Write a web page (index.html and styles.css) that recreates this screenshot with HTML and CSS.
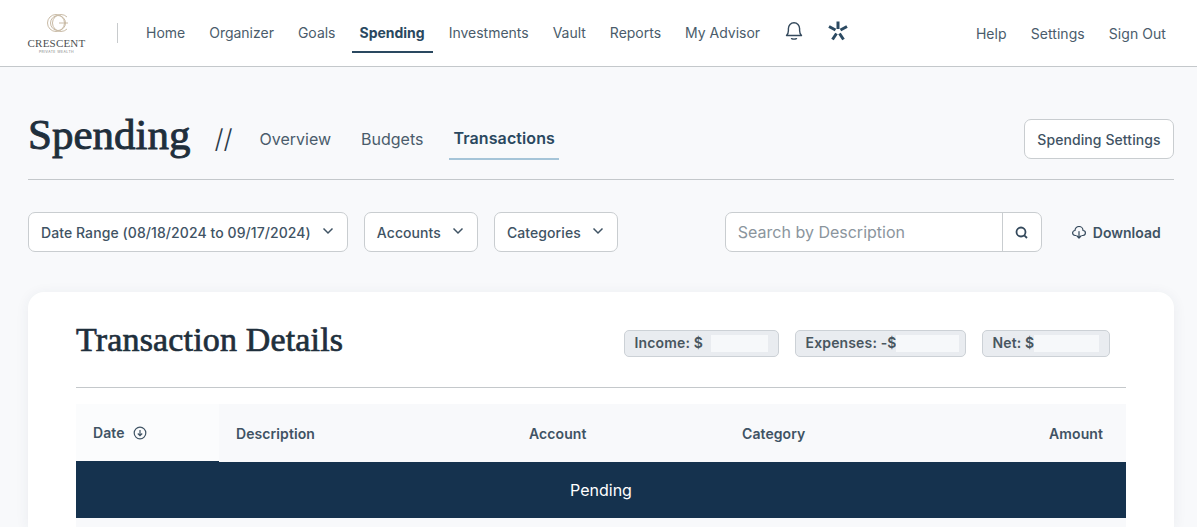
FILE: index.html
```html
<!DOCTYPE html>
<html lang="en">
<head>
<meta charset="utf-8">
<title>Spending</title>
<link rel="stylesheet" href="styles.css">
</head>
<body>
<header class="topbar">
  <div class="logo">
    <svg class="logo-mark" width="24" height="22" viewBox="0 0 24 22" fill="none" stroke="#c9bba6" stroke-width="1">
      <circle cx="10" cy="11" r="8.500"/>
      <circle cx="12" cy="11" r="7.500"/>
      <path d="M21 5a8.500 8.500 0 1 0 0 12"/>
      <path d="M13 11h9"/>
    </svg>
    <div class="logo-name">CRESCENT</div>
    <div class="logo-sub">PRIVATE WEALTH</div>
  </div>
  <span class="logo-divider"></span>
  <nav class="main-nav">
    <a class="nav-item">Home</a>
    <a class="nav-item">Organizer</a>
    <a class="nav-item">Goals</a>
    <a class="nav-item active">Spending</a>
    <a class="nav-item">Investments</a>
    <a class="nav-item">Vault</a>
    <a class="nav-item">Reports</a>
    <a class="nav-item">My Advisor</a>
    <svg class="bell" width="18" height="20" viewBox="0 0 18 20" fill="none" stroke="#34495c" stroke-width="1.400" stroke-linecap="round" stroke-linejoin="round">
      <path d="M1.500 14.500c1.400-1.300 1.900-2.600 1.900-5V7.600C3.400 4.300 5.800 1.700 9 1.700s5.600 2.600 5.600 5.900v1.900c0 2.400.5 3.700 1.900 5z"/>
      <path d="M6.500 17.600c1.500.6 3.500.6 5 0"/>
    </svg>
    <svg class="spark" width="20" height="20" viewBox="0 0 20 20" fill="none" stroke="#2b4a62" stroke-width="3">
      <path d="M10 .5v7.500M1 5.500 7.500 9M19 5.500 12.500 9M4.500 18.500 8.500 12.500M15.500 18.500 11.500 12.500"/>
    </svg>
  </nav>
  <nav class="util-nav">
    <a class="nav-item">Help</a>
    <a class="nav-item">Settings</a>
    <a class="nav-item">Sign Out</a>
  </nav>
</header>

<main class="page">
  <section class="page-head">
    <h1 class="page-title">Spending</h1>
    <span class="slashes">//</span>
    <a class="tab">Overview</a>
    <a class="tab">Budgets</a>
    <a class="tab current">Transactions</a>
    <button class="btn settings-btn">Spending Settings</button>
  </section>

  <section class="filters">
    <button class="btn select">Date Range (08/18/2024 to 09/17/2024)
      <svg width="12" height="8" viewBox="0 0 12 8" fill="none" stroke="#3f5364" stroke-width="1.500"><path d="M1.500 1.500 6 6l4.500-4.500"/></svg>
    </button>
    <button class="btn select">Accounts
      <svg width="12" height="8" viewBox="0 0 12 8" fill="none" stroke="#3f5364" stroke-width="1.500"><path d="M1.500 1.500 6 6l4.500-4.500"/></svg>
    </button>
    <button class="btn select">Categories
      <svg width="12" height="8" viewBox="0 0 12 8" fill="none" stroke="#3f5364" stroke-width="1.500"><path d="M1.500 1.500 6 6l4.500-4.500"/></svg>
    </button>
    <div class="search">
      <span class="search-input">Search by Description</span>
      <span class="search-btn">
        <svg width="13" height="13" viewBox="0 0 13 13" fill="none" stroke="#34495c" stroke-width="1.800"><circle cx="6" cy="6" r="4.500"/><path d="m9.300 9.300 2.700 2.700"/></svg>
      </span>
    </div>
    <a class="download">
      <svg width="14" height="13" viewBox="0 0 14 13" fill="none" stroke="#34495c" stroke-width="1.200" stroke-linecap="round" stroke-linejoin="round"><path d="M4 9.500H3.200A2.500 2.500 0 0 1 3 4.500 4 4 0 0 1 11 4.500 2.500 2.500 0 0 1 10.800 9.500H10"/><path d="M7 5.500v6.500M5 10l2 2 2-2"/></svg>
      Download
    </a>
  </section>

  <section class="card">
    <div class="card-head">
      <h2 class="card-title">Transaction Details</h2>
      <div class="pills">
        <div class="pill pill-income"><span>Income: $</span><i class="mask mask-income"></i></div>
        <div class="pill pill-expenses"><span>Expenses: -$</span><i class="mask mask-expenses"></i></div>
        <div class="pill pill-net"><span>Net: $</span><i class="mask mask-net"></i></div>
      </div>
    </div>
    <div class="table-head">
      <div class="th th-date">Date
        <svg width="14" height="14" viewBox="0 0 14 14" fill="none" stroke="#3f5364" stroke-width="1.200"><circle cx="7" cy="7" r="5.800"/><path d="M7 4v5.500M4.800 7.500 7 9.700l2.200-2.200"/></svg>
      </div>
      <div class="th th-desc">Description</div>
      <div class="th th-account">Account</div>
      <div class="th th-category">Category</div>
      <div class="th th-amount">Amount</div>
    </div>
    <div class="pending-row">Pending</div>
    <div class="row-stub"></div>
  </section>
</main>
</body>
</html>
```
FILE: styles.css
```css
* { box-sizing: border-box; }
html, body { margin: 0; height: 527px; overflow: hidden; }
body {
  background: #f8f9fb;
  font-family: Inter, "Liberation Sans", sans-serif;
  color: #3f5364;
}
a { color: inherit; text-decoration: none; }

.topbar {
  height: 67px;
  background: #fff;
  border-bottom: 1px solid #c4c8cb;
  display: flex;
  align-items: flex-start;
  padding: 0 23px 0 28px;
}
.logo {
  width: 57px;
  height: 66px;
  display: flex;
  flex-direction: column;
  align-items: center;
  padding-top: 12px;
}
.logo-mark { display: block; margin-left: 2px; }
.logo-name {
  font-family: "Liberation Serif", serif;
  font-size: 11px;
  line-height: 11px;
  letter-spacing: 0.2px;
  color: #4b4f52;
  margin-top: 4px;
  white-space: nowrap;
}
.logo-sub {
  font-size: 3.500px;
  line-height: 5px;
  letter-spacing: 0.4px;
  color: #7c7f82;
  margin-top: 1px;
  white-space: nowrap;
}
.logo-divider {
  width: 1px;
  height: 20px;
  background: #c8cbcd;
  margin: 23px 28px 0 32px;
}
.main-nav {
  display: flex;
  align-items: flex-start;
  gap: 8px;
  flex: 1;
}
.nav-item {
  font-size: 14px;
  line-height: 20px;
  letter-spacing: -0.01px;
  padding: 23px 8px 0;
  height: 53px;
  color: #4a5c6b;
  white-space: nowrap;
}
.nav-item.active {
  color: #2a4860;
  font-weight: 700;
  border-bottom: 2px solid #2a4860;
}
.main-nav .nav-item:first-child { margin-left: -8px; }
.bell { margin: 21px 0 0 9px; }
.spark { margin: 21px 0 0 17px; }
.util-nav { display: flex; gap: 8px; }
.util-nav .nav-item { padding-top: 24px; letter-spacing: 0.06px; }

.page { padding: 0 23px 0 28px; }
.page-head {
  height: 113px;
  border-bottom: 1px solid #c4c8cb;
  display: flex;
  align-items: flex-start;
}
.page-title {
  margin: 43px 0 0;
  font-family: "Liberation Serif", serif;
  font-size: 43px;
  line-height: 50px;
  font-weight: 400;
  -webkit-text-stroke: 0.9px #1f2f3c;
  color: #1f2f3c;
}
.slashes {
  font-family: Inter, sans-serif;
  font-weight: 300;
  font-size: 26px;
  line-height: 36px;
  margin: 54px 0 0 24px;
  color: #2b3c4a;
}
.tab {
  font-size: 16px;
  line-height: 22px;
  padding: 0 4px;
  margin: 61px 0 0 23px;
  color: #4a5c6b;
}
.tab + .tab { margin-left: 22px; }
.tab.current {
  font-weight: 600;
  letter-spacing: 0.1px;
  color: #2a4860;
  height: 33px;
  margin-top: 60px;
  border-bottom: 2px solid #a5c4d8;
  padding: 0 4px;
  margin-left: 22px;
}
.btn {
  font-family: inherit;
  font-size: 14px;
  font-weight: 500;
  letter-spacing: 0.08px;
  color: #3f5364;
  background: #fff;
  border: 1px solid #c9cdd0;
  border-radius: 7px;
  white-space: nowrap;
  cursor: pointer;
}
.settings-btn {
  margin: 52px 0 0 auto;
  width: 150px;
  height: 40px;
  padding: 0;
}
.filters {
  display: flex;
  align-items: center;
  height: 112px;
  padding: 32px 0 40px;
}
.select {
  height: 40px;
  padding: 0 13px 0 12px;
  margin-right: 16px;
  display: flex;
  align-items: center;
  gap: 11px;
}
.select svg { margin-bottom: 3px; }
.search {
  margin-left: 91px;
  width: 317px;
  height: 40px;
  background: #fff;
  border: 1px solid #c9cdd0;
  border-radius: 7px;
  display: flex;
}
.search-input {
  flex: 1;
  padding: 0 12px;
  font-size: 16px;
  line-height: 38px;
  color: #8b959d;
  border-right: 1px solid #c9cdd0;
}
.search-btn {
  width: 38px;
  display: flex;
  align-items: center;
  justify-content: center;
}
.download {
  margin-left: 30px;
  display: flex;
  align-items: center;
  gap: 7px;
  font-size: 14px;
  font-weight: 600;
  color: #3f5364;
}
.card {
  background: #fff;
  border-radius: 16px 16px 0 0;
  box-shadow: 0 2px 14px rgba(40, 60, 80, 0.07);
  padding: 0 48px;
}
.card-head {
  height: 96px;
  border-bottom: 1px solid #c4c8cb;
  display: flex;
  align-items: flex-start;
  justify-content: space-between;
}
.card-title {
  margin: 28px 0 0;
  font-family: "Liberation Serif", serif;
  font-size: 34px;
  line-height: 40px;
  font-weight: 400;
  letter-spacing: 0.16px;
  -webkit-text-stroke: 0.7px #1f2f3c;
  color: #1f2f3c;
}
.pills {
  display: flex;
  gap: 16px;
  margin: 38px 16px 0 0;
}
.pill {
  height: 27px;
  background: #e9ecf0;
  border: 1px solid #ccd1d6;
  border-radius: 5px;
  padding: 0 0 2px 9.500px;
  display: flex;
  align-items: center;
  font-size: 14px;
  font-weight: 600;
  letter-spacing: 0.15px;
  color: #48565f;
  white-space: nowrap;
}
.pill-income { width: 155px; }
.pill-expenses { width: 171px; }
.pill-net { width: 128px; }
.mask { display: block; height: 17px; margin-top: 2px; background: #f6f8fa; }
.mask-income { width: 57px; margin-left: 8px; }
.mask-expenses { width: 63px; margin-left: -1px; }
.mask-net { width: 65px; margin-left: 0; }
.table-head {
  margin-top: 16px;
  height: 58px;
  background: #f8f9fb;
  display: flex;
  align-items: center;
  font-size: 14px;
  font-weight: 600;
  letter-spacing: 0.08px;
  color: #3f5364;
}
.th { padding-top: 1px; }
.th-date {
  width: 143px;
  height: 58px;
  padding: 0 0 0 17px;
  display: flex;
  align-items: center;
  gap: 8px;
  background: #fbfcfd;
  border-bottom: 1px solid #15324e;
}
.th-desc { width: 293px; padding-left: 17px; }
.th-account { width: 213px; padding-left: 17px; }
.th-category { width: 200px; padding-left: 17px; }
.th-amount { flex: 1; text-align: right; padding-right: 23px; }
.pending-row {
  height: 56px;
  background: #15324e;
  color: #fff;
  font-size: 16px;
  text-align: center;
  line-height: 56px;
}
.row-stub { height: 9px; background: #f8f9fb; }
```
